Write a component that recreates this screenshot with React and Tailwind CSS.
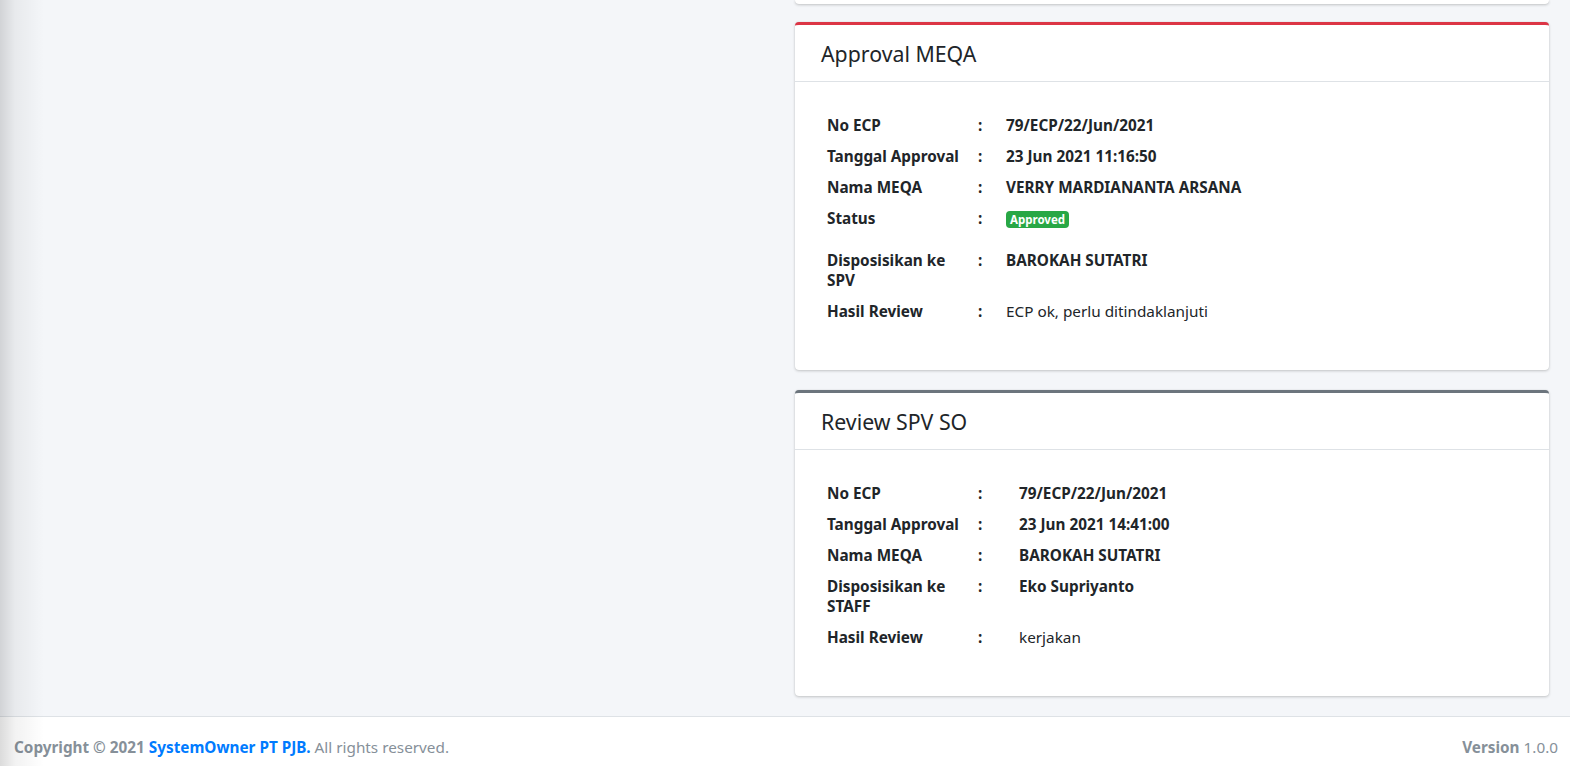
const meqa = [
	{ label: 'No ECP', value: '79/ECP/22/Jun/2021' },
	{ label: 'Tanggal Approval', value: '23 Jun 2021 11:16:50' },
	{ label: 'Nama MEQA', value: 'VERRY MARDIANANTA ARSANA' },
	{ label: 'Status', badge: 'Approved' },
	{ label: 'Disposisikan ke SPV', value: 'BAROKAH SUTATRI' },
	{ label: 'Hasil Review', value: 'ECP ok, perlu ditindaklanjuti', plain: true },
];

const spv = [
	{ label: 'No ECP', value: '79/ECP/22/Jun/2021' },
	{ label: 'Tanggal Approval', value: '23 Jun 2021 14:41:00' },
	{ label: 'Nama MEQA', value: 'BAROKAH SUTATRI' },
	{ label: 'Disposisikan ke STAFF', value: 'Eko Supriyanto' },
	{ label: 'Hasil Review', value: 'kerjakan', plain: true },
];

const DetailCard = ({ title, rows, topColor, colonWidth }) => {
	return (
		<div className={`bg-white rounded-[4px] border-t-[3px] ${topColor} shadow-[0_0_1px_rgba(0,0,0,0.125),0_1px_3px_rgba(0,0,0,0.2)]`}>
			<div className="h-[57px] border-b border-[#dee2e6] pl-[26px] flex items-center">
				<h3 className="text-[21.3px] leading-none text-[#212529] font-normal pt-[2px]">{title}</h3>
			</div>
			<div className="pl-[32px] pt-[27px] pb-[44px]">
				<table className="text-[15.3px] leading-[20px] text-[#212529] border-collapse">
					<tbody>
						{rows.map((row) => (
							<tr key={row.label} className="align-top">
								<td className={`w-[151px] pr-2 font-bold py-[5.5px] ${row.badge ? 'pb-[16.5px]' : ''}`}>{row.label}</td>
								<td className={`font-bold py-[5.5px] ${colonWidth}`}>:</td>
								<td className={`py-[5.5px] ${row.plain ? 'font-normal' : 'font-bold'}`}>
									{row.badge ? (
										<span className="inline-block bg-[#28a745] text-white text-[11.5px] leading-[13px] font-bold px-[4px] py-[2px] rounded-[4px] mt-[1px]">
											{row.badge}
										</span>
									) : (
										row.value
									)}
								</td>
							</tr>
						))}
					</tbody>
				</table>
			</div>
		</div>
	);
};

const App = () => {
	return (
		<div className="relative min-h-[766px] bg-[#f4f6f9] flex flex-col font-['Noto_Sans','Open_Sans',sans-serif]">
			{/* sidebar shadow */}
			<div className="pointer-events-none absolute left-0 top-0 bottom-0 w-[44px] bg-[linear-gradient(to_right,rgba(0,0,0,0.14),rgba(0,0,0,0.05)_15px,rgba(0,0,0,0))]" />

			<main className="flex-1 grid grid-cols-2 gap-[15px] pl-[26px] pr-[21px]">
				<div></div>
				<div className="flex flex-col">
					<div className="h-[4px] bg-white rounded-b-[4px] shadow-[0_0_1px_rgba(0,0,0,0.125),0_1px_3px_rgba(0,0,0,0.2)]" />
					<div className="mt-[18px]">
						<DetailCard title="Approval MEQA" rows={meqa} topColor="border-[#dc3545]" colonWidth="w-[28px]" />
					</div>
					<div className="mt-[20px]">
						<DetailCard title="Review SPV SO" rows={spv} topColor="border-[#6c757d]" colonWidth="w-[41px]" />
					</div>
				</div>
			</main>

			<footer className="mt-[18px] h-[50px] bg-white border-t border-[#dee2e6] flex items-start justify-between pt-[20px] pl-[14px] pr-[12px] text-[15.3px] leading-[20px] text-[#869099]">
				<div>
					<strong>Copyright © 2021 <span className="text-[#007bff]">SystemOwner PT PJB.</span></strong> All rights reserved.
				</div>
				<div>
					<b>Version</b> 1.0.0
				</div>
			</footer>
		</div>
	);
};

export default App;
